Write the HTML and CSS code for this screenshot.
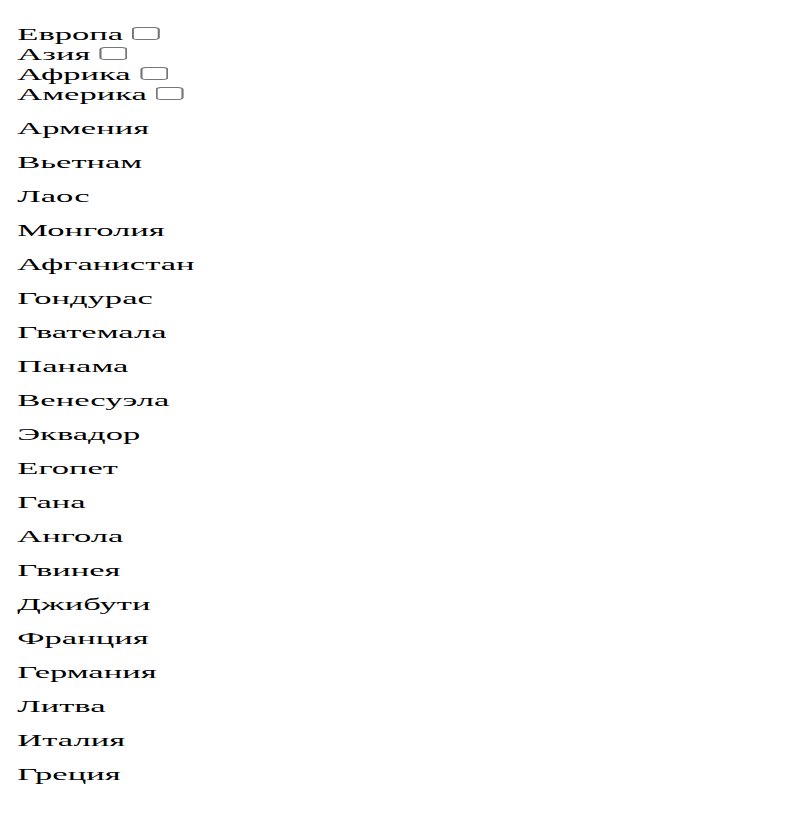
FILE: index.html
```html
<!DOCTYPE html>
<html>
<head>
<meta charset="utf-8">
<link rel="stylesheet" href="styles.css">
</head>
<body>
<div class="page">
<p class="filters">
Европа <input class="box" type="checkbox"><br>
Азия <input class="box" type="checkbox"><br>
Африка <input class="box" type="checkbox"><br>
Америка <input class="box" type="checkbox">
</p>
<p>Армения</p>
<p>Вьетнам</p>
<p>Лаос</p>
<p>Монголия</p>
<p>Афганистан</p>
<p>Гондурас</p>
<p>Гватемала</p>
<p>Панама</p>
<p>Венесуэла</p>
<p>Эквадор</p>
<p>Егопет</p>
<p>Гана</p>
<p>Ангола</p>
<p>Гвинея</p>
<p>Джибути</p>
<p>Франция</p>
<p>Германия</p>
<p>Литва</p>
<p>Италия</p>
<p>Греция</p>
</div>
</body>
</html>
```
FILE: styles.css
```css
html, body {
  overflow: hidden;
}
body {
  margin: 0;
  font-family: "Liberation Serif", serif;
  font-size: 16px;
  color: #000;
}
.page {
  box-sizing: border-box;
  width: 370px;
  padding: 8px;
  transform: scaleX(2.16);
  transform-origin: 0 0;
}
.box {
  margin-left: 0;
}
```
